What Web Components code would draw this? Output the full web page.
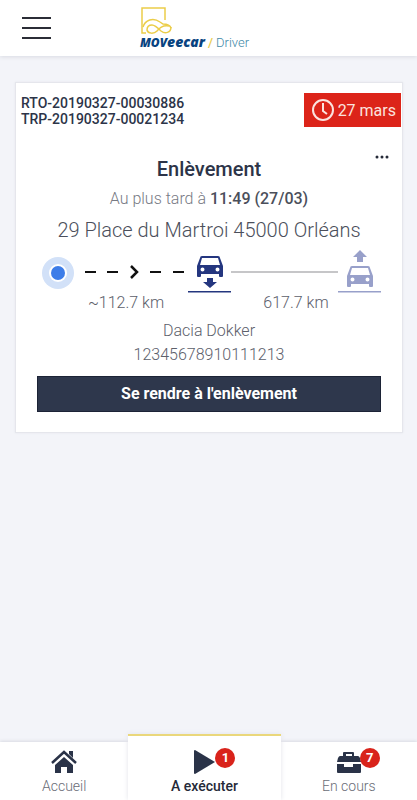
<!DOCTYPE html>
<html lang="fr">
<head>
  <meta charset="utf-8">
  <meta name="viewport" content="width=device-width, initial-scale=1">
  <title>Moveecar Driver</title>
  <style>
    body {
      margin: 0;
      background-color: #f3f4f9;
      color: #2c3448;
      font-family: Roboto, "Liberation Sans", sans-serif;
    }
  </style>
</head>
<body>
  <driver-app>
    <app-header slot="header"></app-header>
    <mission-card>
      <span slot="order">RTO-20190327-00030886</span>
      <span slot="trip">TRP-20190327-00021234</span>
      <date-badge slot="date">27 mars</date-badge>
      <span slot="title">Enlèvement</span>
      <span slot="deadline">11:49 (27/03)</span>
      <span slot="address">29 Place du Martroi 45000 Orléans</span>
      <mission-route slot="route">
        <span slot="first">~112.7 km</span>
        <span slot="second">617.7 km</span>
      </mission-route>
      <span slot="vehicle">Dacia Dokker</span>
      <span slot="vin">12345678910111213</span>
      <span slot="action">Se rendre à l'enlèvement</span>
    </mission-card>
    <tab-bar slot="tabs">
      <tab-item icon="home">Accueil</tab-item>
      <tab-item icon="play" count="1" active>A exécuter</tab-item>
      <tab-item icon="toolbox" count="7">En cours</tab-item>
    </tab-bar>
  </driver-app>

  <script>
    class DriverApp extends HTMLElement {
      constructor() {
        super();
        this.attachShadow({ mode: 'open' }).innerHTML = `
          <style>
            :host {
              display: flex;
              flex-direction: column;
              min-height: 100vh;
            }

            main {
              flex: 1;
              padding: 26px 14px 26px 15px;
            }
          </style>
          <slot name="header"></slot>
          <main><slot></slot></main>
          <slot name="tabs"></slot>
        `;
      }
    }

    class AppHeader extends HTMLElement {
      constructor() {
        super();
        this.attachShadow({ mode: 'open' }).innerHTML = `
          <style>
            :host {
              display: grid;
              grid-template-columns: 1fr auto 1fr;
              height: 56px;
              padding: 0 22px;
              box-sizing: border-box;
              background-color: #fff;
              box-shadow: 0 1px 4px #d9dbe2;
            }

            button {
              align-self: center;
              justify-self: start;
              display: flex;
              padding: 0;
              border: 0;
              background: none;
              color: #2b2d36;
            }

            .logo {
              display: flex;
              flex-direction: column;
              padding-top: 7px;
              margin-right: 28px;
              text-decoration: none;
            }

            .logo svg {
              margin-left: 1px;
            }

            .name {
              display: flex;
              align-items: baseline;
              gap: 3px;
              font-size: 13px;
              font-weight: 300;
              line-height: 16px;
              color: #4189a8;
            }

            .brand {
              font: italic 800 14px/16px "Open Sans", sans-serif;
              color: #07437f;
            }

            .caps {
              font-size: 12px;
            }

            .slash {
              font-weight: 500;
              color: #e9cd4d;
            }
          </style>
          <button type="button" aria-label="Menu">
            <svg width="29" height="24" viewBox="0 0 29 24" fill="none" stroke="currentColor" stroke-width="2">
              <path d="M0 2h29M0 12h29M0 22h29"/>
            </svg>
          </button>
          <a class="logo" href="#">
            <svg width="31" height="27" viewBox="0 0 31 27" fill="none" stroke="#ebcd49" stroke-width="1.5">
              <path d="M5 26H1V1h23v12"/>
              <path d="M2 20c2-7 10-10 17-5l3 2c4 0 7 1 8 4"/>
              <path d="M30 20c0 6-6 7-10 4-4-4-6-6-9-6-4 0-5 3-5 5 1 4 7 4 10 1 3-4 7-6 12-5"/>
            </svg>
            <span class="name">
              <span class="brand"><span class="caps">MOV</span>eecar</span>
              <span class="slash">/</span>
              <span>Driver</span>
            </span>
          </a>
        `;
      }
    }

    class DateBadge extends HTMLElement {
      constructor() {
        super();
        this.attachShadow({ mode: 'open' }).innerHTML = `
          <style>
            :host {
              display: flex;
              align-items: center;
              gap: 4px;
              height: 34px;
              padding: 0 5px 0 8px;
              box-sizing: border-box;
              background-color: #dc2419;
              color: #fbe3df;
              font-size: 16px;
              white-space: nowrap;
            }
          </style>
          <svg width="22" height="22" viewBox="0 0 22 22" fill="none" stroke="currentColor" stroke-width="2">
            <circle cx="11" cy="11" r="10"/>
            <path d="M11 4v8l4 3"/>
          </svg>
          <slot></slot>
        `;
      }
    }

    class MissionCard extends HTMLElement {
      constructor() {
        super();
        this.attachShadow({ mode: 'open' }).innerHTML = `
          <style>
            :host {
              display: block;
              border: 1px solid #e5e6ec;
              background-color: #fff;
              box-shadow: 0 0 2px #e5e6ec;
              text-align: center;
            }

            header {
              display: flex;
              justify-content: space-between;
              padding: 10px 1px 0 5px;
            }

            .refs {
              display: flex;
              flex-direction: column;
              padding-top: 2px;
              font-size: 14px;
              font-weight: 500;
              line-height: 16px;
              text-align: left;
            }

            .more {
              display: flex;
              margin: 28px 13px 0 auto;
              padding: 0;
              border: 0;
              background: none;
              color: #252a38;
            }

            .body {
              padding: 0 21px 20px;
            }

            h2, p {
              margin: 0;
              font-weight: 300;
            }

            h2 {
              font-size: 20px;
              font-weight: 500;
              line-height: 20px;
            }

            .deadline {
              margin-top: 8px;
              font-size: 16px;
              line-height: 24px;
              color: #777a84;
            }

            .deadline b {
              font-weight: 500;
              color: #4b4f5b;
            }

            .address {
              margin-top: 4px;
              font-size: 20px;
              line-height: 30px;
              color: #4b4f5b;
            }

            .vehicle {
              margin-top: 8px;
              font-size: 16px;
              line-height: 24px;
              color: #5c606b;
            }

            .action {
              display: block;
              width: 100%;
              height: 36px;
              margin-top: 9px;
              padding: 0;
              border: 1px solid #1c2336;
              background-color: #2e374c;
              color: #fff;
              font: 700 16px/24px Roboto, sans-serif;
            }
          </style>
          <header>
            <div class="refs">
              <slot name="order"></slot>
              <slot name="trip"></slot>
            </div>
            <slot name="date"></slot>
          </header>
          <button class="more" type="button" aria-label="Plus d'options">
            <svg width="14" height="4" viewBox="0 0 14 4" fill="currentColor">
              <circle cx="2" cy="2" r="1.5"/>
              <circle cx="7" cy="2" r="1.5"/>
              <circle cx="12" cy="2" r="1.5"/>
            </svg>
          </button>
          <div class="body">
            <h2><slot name="title"></slot></h2>
            <p class="deadline">Au plus tard à <b><slot name="deadline"></slot></b></p>
            <p class="address"><slot name="address"></slot></p>
            <slot name="route"></slot>
            <p class="vehicle"><slot name="vehicle"></slot><br><slot name="vin"></slot></p>
            <button class="action" type="button"><slot name="action"></slot></button>
          </div>
        `;
      }
    }

    // car seen from the front, 26 x 21
    const CAR = `
      <path fill-rule="evenodd" d="M5 0h16q2 0 2 2l3 8v10q0 1-1 1h-2q-1 0-1-1v-2H4v2q0 1-1 1H1q-1 0-1-1V10l3-8q0-2 2-2ZM5 2 3 9h20L21 2ZM5.500 11.500a2 2 0 1 0 0 4 2 2 0 0 0 0-4ZM20.500 11.500a2 2 0 1 0 0 4 2 2 0 0 0 0-4Z"/>
    `;

    class MissionRoute extends HTMLElement {
      constructor() {
        super();
        this.attachShadow({ mode: 'open' }).innerHTML = `
          <style>
            :host {
              display: block;
              margin-top: 4px;
            }

            .track {
              display: flex;
              align-items: center;
              padding-left: 5px;
            }

            svg {
              flex: none;
            }

            .travel {
              flex: 11;
              display: flex;
              align-items: center;
              justify-content: space-between;
              padding: 0 4px 0 10px;
            }

            .dash {
              width: 11px;
              height: 2px;
              background-color: #111;
            }

            .line {
              flex: 12;
              height: 2px;
              background-color: #c6c6c8;
            }

            .distances {
              display: grid;
              grid-template-columns: 1fr 1fr;
              padding-left: 4px;
              font-size: 16px;
              font-weight: 300;
              line-height: 16px;
              color: #5c606b;
            }
          </style>
          <div class="track">
            <svg width="33" height="46" viewBox="0 0 33 46">
              <circle cx="16" cy="24" r="16" fill="#d2e1f8"/>
              <circle cx="16" cy="24" r="9" fill="#fff"/>
              <circle cx="16" cy="24" r="7" fill="#3d7de8"/>
            </svg>
            <div class="travel">
              <span class="dash"></span>
              <span class="dash"></span>
              <svg width="10" height="16" viewBox="0 0 10 16" fill="none" stroke="#111" stroke-width="2.500">
                <path d="m2 2 6 6-6 6"/>
              </svg>
              <span class="dash"></span>
              <span class="dash"></span>
            </div>
            <svg width="43" height="46" viewBox="0 0 43 46" fill="#24367f">
              <g transform="translate(9 7)">${CAR}</g>
              <path d="M19 29h6v4h4l-7 6-7-6h4ZM0 42h43v1.500H0Z"/>
            </svg>
            <span class="line"></span>
            <svg width="43" height="46" viewBox="0 0 43 46" fill="#98a0ca">
              <g transform="translate(9 17)">${CAR}</g>
              <path d="M19 13h6V8h4l-7-7-7 7h4ZM0 42h43v1.500H0Z"/>
            </svg>
          </div>
          <div class="distances">
            <slot name="first"></slot>
            <slot name="second"></slot>
          </div>
        `;
      }
    }

    class TabBar extends HTMLElement {
      constructor() {
        super();
        this.attachShadow({ mode: 'open' }).innerHTML = `
          <style>
            :host {
              display: block;
              background-color: #fff;
              box-shadow: 0 -1px 3px #d9dbe2;
            }

            nav {
              display: grid;
              grid-template-columns: 16fr 19fr 17fr;
            }
          </style>
          <nav><slot></slot></nav>
        `;
      }
    }

    const TAB_ICONS = {
      home: `
        <path d="m1 13 12-11 12 11" fill="none" stroke="currentColor" stroke-width="2.500"/>
        <path d="M18 1h4v7l-4-4ZM13 7l9 8v8h-6v-6h-6v6H4v-8Z"/>
      `,
      play: '<path d="M3 1v22q0 1 1 1l20-12L4 0Q3 0 3 1Z"/>',
      toolbox: `
        <path fill-rule="evenodd" d="M7 6V3q0-1 1-1h9q1 0 1 1v3h4q1 0 2 2l1 4H1l1-4q1-2 2-2ZM10 4v2h6V4Z"/>
        <path d="M1 14h7v3h9v-3h8v8q0 1-1 1H2q-1 0-1-1Z"/>
      `,
    };

    class TabItem extends HTMLElement {
      constructor() {
        super();
        this.attachShadow({ mode: 'open' });
      }

      connectedCallback() {
        const count = this.getAttribute('count');

        this.shadowRoot.innerHTML = `
          <style>
            :host {
              display: block;
            }

            /* the current tab rises above the bar */
            :host([active]) {
              margin-top: -8px;
              border-top: 2px solid #ead77b;
              background-color: #fff;
              box-shadow: 0 0 5px #e3e4ea;
            }

            a {
              display: flex;
              flex-direction: column;
              align-items: center;
              padding: 8px 0 4px;
              color: #6a6d77;
              font-size: 14px;
              font-weight: 300;
              line-height: 20px;
              text-decoration: none;
            }

            :host([active]) a {
              padding-top: 14px;
              color: #252a38;
              font-weight: 500;
            }

            .icon {
              display: flex;
              position: relative;
              margin-bottom: 2px;
              color: #2a3348;
            }

            .count {
              position: absolute;
              top: -2px;
              left: 24px;
              width: 20px;
              border-radius: 50%;
              background-color: #d9231b;
              color: #fff;
              font-size: 13px;
              font-weight: 700;
              text-align: center;
            }
          </style>
          <a href="#">
            <span class="icon">
              <svg width="26" height="24" viewBox="0 0 26 24" fill="currentColor">${TAB_ICONS[this.getAttribute('icon')]}</svg>
              ${count ? `<span class="count">${count}</span>` : ''}
            </span>
            <slot></slot>
          </a>
        `;
      }
    }

    customElements.define('driver-app', DriverApp);
    customElements.define('app-header', AppHeader);
    customElements.define('date-badge', DateBadge);
    customElements.define('mission-card', MissionCard);
    customElements.define('mission-route', MissionRoute);
    customElements.define('tab-bar', TabBar);
    customElements.define('tab-item', TabItem);
  </script>
</body>
</html>
